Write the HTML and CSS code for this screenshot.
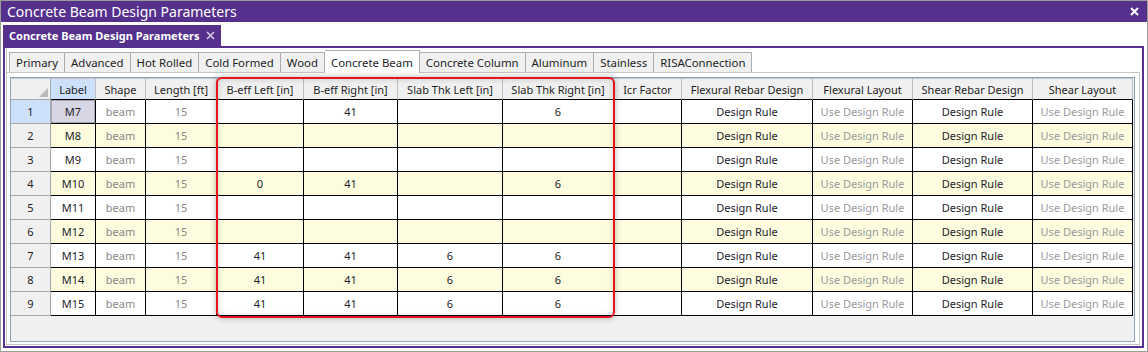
FILE: index.html
```html
<!DOCTYPE html>
<html>
<head>
  <meta charset="UTF-8">
  <title>Concrete Beam Design Parameters</title>
  <link rel="stylesheet" href="styles.css">
</head>
<body>
  <div class="window">
    <!-- Window title bar -->
    <div class="titlebar">
      <span>Concrete Beam Design Parameters</span>
      <svg class="close" width="9" height="9" viewBox="0 0 9 9"><path d="M1 1 L8 8 M8 1 L1 8" stroke="#fff" stroke-width="2"/></svg>
    </div>

    <div class="docarea">
      <!-- Document tab -->
      <div class="doctab">
        <span>Concrete Beam Design Parameters</span>
        <svg width="9" height="9" viewBox="0 0 9 9"><path d="M1 1 L8 8 M8 1 L1 8" stroke="#d6cce6" stroke-width="1.6"/></svg>
      </div>

      <div class="panel">
        <div class="tabctl">
          <div class="tabstrip">
            <div class="tab">Primary</div>
            <div class="tab">Advanced</div>
            <div class="tab">Hot Rolled</div>
            <div class="tab">Cold Formed</div>
            <div class="tab">Wood</div>
            <div class="tab active">Concrete Beam</div>
            <div class="tab">Concrete Column</div>
            <div class="tab">Aluminum</div>
            <div class="tab">Stainless</div>
            <div class="tab">RISAConnection</div>
          </div>

          <div class="page">
            <div class="sheetwrap">
              <div class="sheet">
                <!-- header row -->
                <div class="hd corner"><svg width="9" height="9" viewBox="0 0 9 9"><polygon points="9,0 9,9 0,9" fill="#b9b9b9"/></svg></div>
                <div class="hd cur">Label</div>
                <div class="hd">Shape</div>
                <div class="hd">Length [ft]</div>
                <div class="hd">B-eff Left [in]</div>
                <div class="hd">B-eff Right [in]</div>
                <div class="hd">Slab Thk Left [in]</div>
                <div class="hd">Slab Thk Right [in]</div>
                <div class="hd">Icr Factor</div>
                <div class="hd">Flexural Rebar Design</div>
                <div class="hd">Flexural Layout</div>
                <div class="hd">Shear Rebar Design</div>
                <div class="hd">Shear Layout</div>

                <div class="row">
                  <div class="rh cur">1</div>
                  <div class="c lbl sel">M7</div>
                  <div class="c dim">beam</div>
                  <div class="c dim">15</div>
                  <div class="c"></div>
                  <div class="c">41</div>
                  <div class="c"></div>
                  <div class="c">6</div>
                  <div class="c"></div>
                  <div class="c">Design Rule</div>
                  <div class="c use">Use Design Rule</div>
                  <div class="c">Design Rule</div>
                  <div class="c use">Use Design Rule</div>
                </div>

                <div class="row alt">
                  <div class="rh">2</div>
                  <div class="c lbl">M8</div>
                  <div class="c dim">beam</div>
                  <div class="c dim">15</div>
                  <div class="c"></div>
                  <div class="c"></div>
                  <div class="c"></div>
                  <div class="c"></div>
                  <div class="c"></div>
                  <div class="c">Design Rule</div>
                  <div class="c use">Use Design Rule</div>
                  <div class="c">Design Rule</div>
                  <div class="c use">Use Design Rule</div>
                </div>

                <div class="row">
                  <div class="rh">3</div>
                  <div class="c lbl">M9</div>
                  <div class="c dim">beam</div>
                  <div class="c dim">15</div>
                  <div class="c"></div>
                  <div class="c"></div>
                  <div class="c"></div>
                  <div class="c"></div>
                  <div class="c"></div>
                  <div class="c">Design Rule</div>
                  <div class="c use">Use Design Rule</div>
                  <div class="c">Design Rule</div>
                  <div class="c use">Use Design Rule</div>
                </div>

                <div class="row alt">
                  <div class="rh">4</div>
                  <div class="c lbl">M10</div>
                  <div class="c dim">beam</div>
                  <div class="c dim">15</div>
                  <div class="c">0</div>
                  <div class="c">41</div>
                  <div class="c"></div>
                  <div class="c">6</div>
                  <div class="c"></div>
                  <div class="c">Design Rule</div>
                  <div class="c use">Use Design Rule</div>
                  <div class="c">Design Rule</div>
                  <div class="c use">Use Design Rule</div>
                </div>

                <div class="row">
                  <div class="rh">5</div>
                  <div class="c lbl">M11</div>
                  <div class="c dim">beam</div>
                  <div class="c dim">15</div>
                  <div class="c"></div>
                  <div class="c"></div>
                  <div class="c"></div>
                  <div class="c"></div>
                  <div class="c"></div>
                  <div class="c">Design Rule</div>
                  <div class="c use">Use Design Rule</div>
                  <div class="c">Design Rule</div>
                  <div class="c use">Use Design Rule</div>
                </div>

                <div class="row alt">
                  <div class="rh">6</div>
                  <div class="c lbl">M12</div>
                  <div class="c dim">beam</div>
                  <div class="c dim">15</div>
                  <div class="c"></div>
                  <div class="c"></div>
                  <div class="c"></div>
                  <div class="c"></div>
                  <div class="c"></div>
                  <div class="c">Design Rule</div>
                  <div class="c use">Use Design Rule</div>
                  <div class="c">Design Rule</div>
                  <div class="c use">Use Design Rule</div>
                </div>

                <div class="row">
                  <div class="rh">7</div>
                  <div class="c lbl">M13</div>
                  <div class="c dim">beam</div>
                  <div class="c dim">15</div>
                  <div class="c">41</div>
                  <div class="c">41</div>
                  <div class="c">6</div>
                  <div class="c">6</div>
                  <div class="c"></div>
                  <div class="c">Design Rule</div>
                  <div class="c use">Use Design Rule</div>
                  <div class="c">Design Rule</div>
                  <div class="c use">Use Design Rule</div>
                </div>

                <div class="row alt">
                  <div class="rh">8</div>
                  <div class="c lbl">M14</div>
                  <div class="c dim">beam</div>
                  <div class="c dim">15</div>
                  <div class="c">41</div>
                  <div class="c">41</div>
                  <div class="c">6</div>
                  <div class="c">6</div>
                  <div class="c"></div>
                  <div class="c">Design Rule</div>
                  <div class="c use">Use Design Rule</div>
                  <div class="c">Design Rule</div>
                  <div class="c use">Use Design Rule</div>
                </div>

                <div class="row">
                  <div class="rh">9</div>
                  <div class="c lbl">M15</div>
                  <div class="c dim">beam</div>
                  <div class="c dim">15</div>
                  <div class="c">41</div>
                  <div class="c">41</div>
                  <div class="c">6</div>
                  <div class="c">6</div>
                  <div class="c"></div>
                  <div class="c">Design Rule</div>
                  <div class="c use">Use Design Rule</div>
                  <div class="c">Design Rule</div>
                  <div class="c use">Use Design Rule</div>
                </div>
              </div>

              <!-- red callout around the slab columns -->
              <div class="highlight"></div>
            </div>
          </div>
        </div>
      </div>
    </div>
  </div>
</body>
</html>
```

FILE: styles.css
```css
/* Spreadsheet-style dialog */
* {
  box-sizing: border-box;
}
body {
  margin: 0;
  font-family: "Noto Sans", "Open Sans", sans-serif;
  background-color: #fff;
  color: #1e1e1e;
}
.window {
  width: 1148px;
  height: 352px;
  border: 1px solid #9c9c9c;
  display: flex;
  flex-direction: column;
}
.titlebar {
  height: 21px;
  flex: none;
  background-color: #55308d;
  color: #fff;
  font-size: 14px;
  display: flex;
  align-items: center;
  justify-content: space-between;
  padding: 0 8px 0 6px;
}
.docarea {
  flex: 1;
  padding: 3px 3px 3px 2px;
  display: flex;
  flex-direction: column;
}
.doctab {
  width: 218px;
  height: 21px;
  flex: none;
  background-color: #55308d;
  color: #fff;
  font-size: 11px;
  font-weight: bold;
  white-space: nowrap;
  display: flex;
  align-items: center;
  justify-content: space-between;
  padding: 0 6px 0 6px;
}
.panel {
  flex: 1;
  border: 2px solid #55308d;
  padding: 0 2px 1px 1px;
  display: flex;
}
.tabctl {
  flex: 1;
  border-left: 1px solid #c6c6c6;
  display: flex;
  flex-direction: column;
}
.tabstrip {
  height: 24px;
  flex: none;
  display: flex;
  align-items: flex-end;
  padding-left: 2px;
}
.tab {
  height: 20px;
  border: 1px solid #acacac;
  border-left: none;
  border-bottom: none;
  background-color: #f0f0f0;
  font-size: 11.4px;
  padding: 0 6px;
  white-space: nowrap;
  display: flex;
  align-items: center;
}
.tab:first-child {
  border-left: 1px solid #acacac;
}
.tab.active {
  height: 23px;
  margin-bottom: -1px;
  background-color: #fff;
  position: relative;
}
.page {
  flex: 1;
  border: 1px solid #c6c6c6;
  border-left: none;
  padding: 4px 4px 2px 3px;
  display: flex;
}
.sheetwrap {
  flex: 1;
  border: 1px solid #8fa3bf;
  background-color: #f0f0f0;
  position: relative;
}
.sheet {
  display: grid;
  grid-template-columns: 40px 45px 50px 71px 87px 94px 105px 111px 68px 131px 100px 120px 100px;
  grid-template-rows: 22px;
  grid-auto-rows: 24px;
  font-size: 11px;
}
.row {
  display: contents;
}
.hd, .rh, .c {
  display: flex;
  align-items: center;
  justify-content: center;
  white-space: nowrap;
  border-right: 1px solid #000;
  border-bottom: 1px solid #000;
}
.hd {
  background-color: #f0f0f0;
  border-right-color: #bdbdbd;
  border-top: 1px solid #c8c8c8;
  color: #1e1e1e;
}
.hd.corner {
  justify-content: flex-end;
  align-items: flex-end;
  padding: 0 2px 2px 0;
  border-right-color: #a8a8a8;
  border-bottom-color: #a8a8a8;
}
.hd.cur, .rh.cur {
  background-color: #cde0fa;
}
.rh {
  background-color: #f0f0f0;
  border-right-color: #a8a8a8;
  border-bottom-color: #a8a8a8;
  color: #1e1e1e;
}
.c {
  background-color: #fff;
  color: #1c1c2a;
}
.row.alt .c {
  background-color: #fdfcdf;
}
.c.sel {
  background-color: #d6d6e4;
  box-shadow: inset 0 0 0 1px #a6a6b6;
}
.c.dim {
  color: #8c8884;
}
.c.use {
  color: #9a9a9a;
}
.highlight {
  position: absolute;
  left: 205px;
  top: -1px;
  width: 399px;
  height: 241px;
  border: 2px solid #e8141c;
  border-radius: 6px;
  box-shadow: 0 0 6px rgba(0, 0, 0, 0.3), inset 0 0 6px rgba(0, 0, 0, 0.18);
}
```
